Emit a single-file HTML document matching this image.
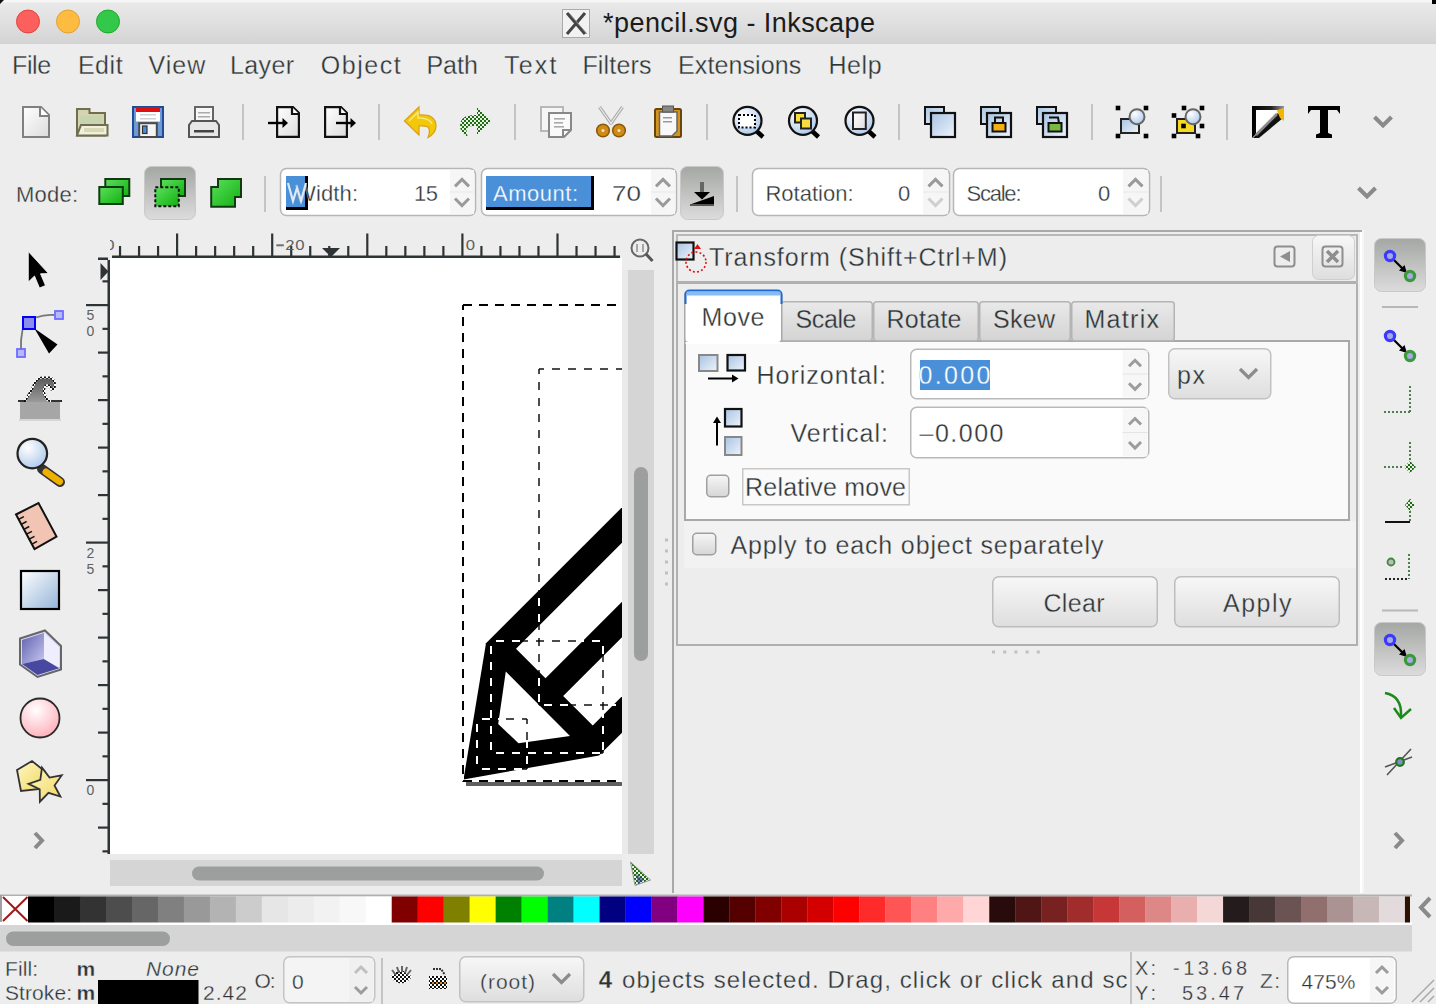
<!DOCTYPE html>
<html><head><meta charset="utf-8"><title>Inkscape</title>
<style>html,body{margin:0;padding:0;background:#ededed;overflow:hidden}
svg{display:block} text{font-family:"Liberation Sans", sans-serif;white-space:pre}</style></head>
<body><svg width="1436" height="1004" viewBox="0 0 1436 1004">
<defs>
<linearGradient id="gTitle" x1="0" y1="0" x2="0" y2="1"><stop offset="0" stop-color="#ebebeb"/><stop offset="1" stop-color="#d4d4d4"/></linearGradient>
<linearGradient id="gBtn" x1="0" y1="0" x2="0" y2="1"><stop offset="0" stop-color="#f7f7f7"/><stop offset="1" stop-color="#dedede"/></linearGradient>
<linearGradient id="gPress" x1="0" y1="0" x2="0" y2="1"><stop offset="0" stop-color="#a5a7a4"/><stop offset="1" stop-color="#dcdcdc"/></linearGradient>
<linearGradient id="gTab" x1="0" y1="0" x2="0" y2="1"><stop offset="0" stop-color="#e9e9e9"/><stop offset="1" stop-color="#d4d4d4"/></linearGradient>
<linearGradient id="gChk" x1="0" y1="0" x2="0" y2="1"><stop offset="0" stop-color="#f6f6f6"/><stop offset="1" stop-color="#d6d6d6"/></linearGradient>
</defs>
<rect x="0" y="0" width="1436" height="1004" fill="#ededed"/>
<rect x="0" y="0" width="1436" height="44" fill="url(#gTitle)"/>
<rect x="0" y="0" width="1436" height="2.5" fill="#f6f6f6"/>
<rect x="0" y="43" width="1436" height="1" fill="#d2d2d2"/>
<path d="M0 0 H4 L0 4 Z" fill="#111"/><rect x="1432" y="0" width="4" height="4" fill="#000"/>
<circle cx="28" cy="21.5" r="11.5" fill="#fc605c" stroke="#e0443e" stroke-width="1"/>
<circle cx="68" cy="21.5" r="11.5" fill="#fdbc40" stroke="#dea236" stroke-width="1"/>
<circle cx="108" cy="21.5" r="11.5" fill="#34c84a" stroke="#1aab29" stroke-width="1"/>
<rect x="562.5" y="9.5" width="27" height="28" fill="#f2f2f2" stroke="#aaa" stroke-width="1"/>
<path d="M567 13 L585 34 M585 13 L567 34" stroke="#444" stroke-width="3"/>
<path d="M569 13 L587 34" stroke="#888" stroke-width="1"/>
<text x="603" y="31.5" font-size="27" fill="#1b1b1b" textLength="272" lengthAdjust="spacing" >*pencil.svg - Inkscape</text>
<text x="12.1" y="73.8" font-size="25" fill="#2e3436" stroke="#ededed" stroke-width="0.3" textLength="39.0" lengthAdjust="spacing" >File</text>
<text x="77.9" y="73.8" font-size="25" fill="#2e3436" stroke="#ededed" stroke-width="0.3" textLength="44.7" lengthAdjust="spacing" >Edit</text>
<text x="148.4" y="73.8" font-size="25" fill="#2e3436" stroke="#ededed" stroke-width="0.3" textLength="56.9" lengthAdjust="spacing" >View</text>
<text x="229.9" y="73.8" font-size="25" fill="#2e3436" stroke="#ededed" stroke-width="0.3" textLength="64.1" lengthAdjust="spacing" >Layer</text>
<text x="320.8" y="73.8" font-size="25" fill="#2e3436" stroke="#ededed" stroke-width="0.3" textLength="79.8" lengthAdjust="spacing" >Object</text>
<text x="426.4" y="73.8" font-size="25" fill="#2e3436" stroke="#ededed" stroke-width="0.3" textLength="51.4" lengthAdjust="spacing" >Path</text>
<text x="504.2" y="73.8" font-size="25" fill="#2e3436" stroke="#ededed" stroke-width="0.3" textLength="52.2" lengthAdjust="spacing" >Text</text>
<text x="582.4" y="73.8" font-size="25" fill="#2e3436" stroke="#ededed" stroke-width="0.3" textLength="69.2" lengthAdjust="spacing" >Filters</text>
<text x="678" y="73.8" font-size="25" fill="#2e3436" stroke="#ededed" stroke-width="0.3" textLength="123.3" lengthAdjust="spacing" >Extensions</text>
<text x="828.4" y="73.8" font-size="25" fill="#2e3436" stroke="#ededed" stroke-width="0.3" textLength="53.2" lengthAdjust="spacing" >Help</text>
<rect x="242" y="104" width="2" height="36" fill="#c4c4c4"/>
<rect x="378" y="104" width="2" height="36" fill="#c4c4c4"/>
<rect x="514" y="104" width="2" height="36" fill="#c4c4c4"/>
<rect x="706" y="104" width="2" height="36" fill="#c4c4c4"/>
<rect x="898" y="104" width="2" height="36" fill="#c4c4c4"/>
<rect x="1091" y="104" width="2" height="36" fill="#c4c4c4"/>
<rect x="1226" y="104" width="2" height="36" fill="#c4c4c4"/>
<text x="16" y="201.5" font-size="22" fill="#2e3436" stroke="#ededed" stroke-width="0.3" textLength="62" lengthAdjust="spacing" >Mode:</text>
<rect x="144.5" y="166.5" width="51" height="53" rx="7" fill="url(#gPress)" stroke="#c9c9c9"/>
<rect x="264" y="176" width="2" height="36" fill="#c4c4c4"/>
<rect x="280.5" y="168.5" width="195" height="47" rx="6" fill="#fff" stroke="#b6b6b6" stroke-width="1.5"/>
<rect x="450" y="170" width="24" height="44" fill="#f6f6f6"/>
<rect x="450" y="191.5" width="24" height="1" fill="#e8e8e8"/>
<path d="M455.0 186.4 L462.0 179.4 L469.0 186.4" fill="none" stroke="#9a9a9a" stroke-width="3"/>
<path d="M455.0 198.56 L462.0 205.56 L469.0 198.56" fill="none" stroke="#9a9a9a" stroke-width="3"/>
<rect x="286" y="176" width="22" height="33" fill="#4a90d9"/>
<rect x="305" y="176" width="3" height="34" fill="#000"/><rect x="286" y="207" width="22" height="3" fill="#000"/>
<text x="295" y="201" font-size="22" fill="#2e3436" stroke="#ffffff" stroke-width="0.3" textLength="63" lengthAdjust="spacing" >Width:</text>
<path d="M288 183 L293 201 L297 188 L301 201 L306 183" fill="none" stroke="#dfe9f5" stroke-width="2.2"/>
<text x="414" y="201" font-size="22" fill="#2e3436" stroke="#ffffff" stroke-width="0.3" textLength="24" lengthAdjust="spacing" >15</text>
<rect x="481.5" y="168.5" width="195" height="47" rx="6" fill="#fff" stroke="#b6b6b6" stroke-width="1.5"/>
<rect x="651" y="170" width="24" height="44" fill="#f6f6f6"/>
<rect x="651" y="191.5" width="24" height="1" fill="#e8e8e8"/>
<path d="M656.0 186.4 L663.0 179.4 L670.0 186.4" fill="none" stroke="#9a9a9a" stroke-width="3"/>
<path d="M656.0 198.56 L663.0 205.56 L670.0 198.56" fill="none" stroke="#9a9a9a" stroke-width="3"/>
<rect x="486" y="176" width="108" height="33" fill="#4a90d9"/>
<rect x="591" y="176" width="3" height="34" fill="#000"/><rect x="486" y="207" width="108" height="3" fill="#000"/>
<text x="493" y="201" font-size="22" fill="#ffffff" stroke="#4a90d9" stroke-width="0.3" textLength="85" lengthAdjust="spacing" >Amount:</text>
<text x="612" y="201" font-size="22" fill="#2e3436" stroke="#ffffff" stroke-width="0.3" textLength="29" lengthAdjust="spacingAndGlyphs">70</text>
<rect x="680.5" y="166.5" width="43" height="53" rx="7" fill="url(#gPress)" stroke="#c9c9c9"/>
<rect x="736" y="176" width="2" height="36" fill="#c4c4c4"/>
<rect x="752.5" y="168.5" width="197" height="47" rx="6" fill="#fff" stroke="#b6b6b6" stroke-width="1.5"/>
<rect x="923" y="170" width="25" height="44" fill="#f6f6f6"/>
<rect x="923" y="191.5" width="25" height="1" fill="#e8e8e8"/>
<path d="M928.5 186.4 L935.5 179.4 L942.5 186.4" fill="none" stroke="#9a9a9a" stroke-width="3"/>
<path d="M928.5 198.56 L935.5 205.56 L942.5 198.56" fill="none" stroke="#cfcfcf" stroke-width="3"/>
<text x="765.5" y="201" font-size="22" fill="#2e3436" stroke="#ffffff" stroke-width="0.3" textLength="88" lengthAdjust="spacing" >Rotation:</text>
<text x="898" y="201" font-size="22" fill="#2e3436" stroke="#ffffff" stroke-width="0.3" textLength="14" lengthAdjust="spacing" >0</text>
<rect x="953.5" y="168.5" width="196" height="47" rx="6" fill="#fff" stroke="#b6b6b6" stroke-width="1.5"/>
<rect x="1123" y="170" width="25" height="44" fill="#f6f6f6"/>
<rect x="1123" y="191.5" width="25" height="1" fill="#e8e8e8"/>
<path d="M1128.5 186.4 L1135.5 179.4 L1142.5 186.4" fill="none" stroke="#9a9a9a" stroke-width="3"/>
<path d="M1128.5 198.56 L1135.5 205.56 L1142.5 198.56" fill="none" stroke="#cfcfcf" stroke-width="3"/>
<text x="966.5" y="201" font-size="22" fill="#2e3436" stroke="#ffffff" stroke-width="0.3" textLength="55" lengthAdjust="spacing" >Scale:</text>
<text x="1098" y="201" font-size="22" fill="#2e3436" stroke="#ffffff" stroke-width="0.3" textLength="14" lengthAdjust="spacing" >0</text>
<rect x="1160" y="176" width="2" height="36" fill="#c4c4c4"/>
<path d="M1358.5 188 L1367 196.5 L1375.5 188" fill="none" stroke="#8a8a8a" stroke-width="4"/>
<path d="M1374.5 117 L1383 125.5 L1391.5 117" fill="none" stroke="#8a8a8a" stroke-width="4"/>
<rect x="110" y="258" width="512" height="596" fill="#ffffff"/>
<rect x="112" y="255.5" width="508" height="2.5" fill="#2e3436"/>
<rect x="118.94" y="246" width="2.2" height="11" fill="#2e3436"/>
<rect x="137.96" y="246" width="2.2" height="11" fill="#2e3436"/>
<rect x="156.98" y="246" width="2.2" height="11" fill="#2e3436"/>
<rect x="176.00" y="233.5" width="2.2" height="23.5" fill="#2e3436"/>
<rect x="195.02" y="246" width="2.2" height="11" fill="#2e3436"/>
<rect x="214.04" y="246" width="2.2" height="11" fill="#2e3436"/>
<rect x="233.06" y="246" width="2.2" height="11" fill="#2e3436"/>
<rect x="252.08" y="246" width="2.2" height="11" fill="#2e3436"/>
<rect x="271.10" y="233.5" width="2.2" height="23.5" fill="#2e3436"/>
<rect x="290.12" y="246" width="2.2" height="11" fill="#2e3436"/>
<rect x="309.14" y="246" width="2.2" height="11" fill="#2e3436"/>
<rect x="328.16" y="246" width="2.2" height="11" fill="#2e3436"/>
<rect x="347.18" y="246" width="2.2" height="11" fill="#2e3436"/>
<rect x="366.20" y="233.5" width="2.2" height="23.5" fill="#2e3436"/>
<rect x="385.22" y="246" width="2.2" height="11" fill="#2e3436"/>
<rect x="404.24" y="246" width="2.2" height="11" fill="#2e3436"/>
<rect x="423.26" y="246" width="2.2" height="11" fill="#2e3436"/>
<rect x="442.28" y="246" width="2.2" height="11" fill="#2e3436"/>
<rect x="461.30" y="233.5" width="2.2" height="23.5" fill="#2e3436"/>
<rect x="480.32" y="246" width="2.2" height="11" fill="#2e3436"/>
<rect x="499.34" y="246" width="2.2" height="11" fill="#2e3436"/>
<rect x="518.36" y="246" width="2.2" height="11" fill="#2e3436"/>
<rect x="537.38" y="246" width="2.2" height="11" fill="#2e3436"/>
<rect x="556.40" y="233.5" width="2.2" height="23.5" fill="#2e3436"/>
<rect x="575.42" y="246" width="2.2" height="11" fill="#2e3436"/>
<rect x="594.44" y="246" width="2.2" height="11" fill="#2e3436"/>
<rect x="613.46" y="246" width="2.2" height="11" fill="#2e3436"/>
<rect x="276.3" y="244.3" width="7.5" height="2" fill="#707070" />
<text x="285.3" y="249.8" font-size="14" fill="#606060" textLength="9.3" lengthAdjust="spacingAndGlyphs" >2</text>
<text x="295.3" y="249.8" font-size="14" fill="#606060" textLength="9.3" lengthAdjust="spacingAndGlyphs" >0</text>
<text x="465.8" y="249.8" font-size="14" fill="#606060" textLength="9.3" lengthAdjust="spacingAndGlyphs" >0</text>
<clipPath id="cpR"><rect x="110" y="230" width="20" height="30"/></clipPath>
<text x="105.3" y="249.8" font-size="14" fill="#606060" textLength="9.3" lengthAdjust="spacingAndGlyphs" clip-path="url(#cpR)">0</text>
<path d="M322 248 L340 248 L331 257 Z" fill="#2e3436"/>
<rect x="107.5" y="260" width="2.5" height="594" fill="#2e3436"/>
<rect x="98" y="257.5" width="10" height="2.5" fill="#2e3436"/>
<rect x="102.5" y="280.25" width="5.5" height="2.2" fill="#2e3436"/>
<rect x="86" y="304.00" width="22" height="2.2" fill="#2e3436"/>
<rect x="102.5" y="327.75" width="5.5" height="2.2" fill="#2e3436"/>
<rect x="98" y="351.50" width="10" height="2.2" fill="#2e3436"/>
<rect x="102.5" y="375.25" width="5.5" height="2.2" fill="#2e3436"/>
<rect x="98" y="399.00" width="10" height="2.2" fill="#2e3436"/>
<rect x="102.5" y="422.75" width="5.5" height="2.2" fill="#2e3436"/>
<rect x="98" y="446.50" width="10" height="2.2" fill="#2e3436"/>
<rect x="102.5" y="470.25" width="5.5" height="2.2" fill="#2e3436"/>
<rect x="98" y="494.00" width="10" height="2.2" fill="#2e3436"/>
<rect x="102.5" y="517.75" width="5.5" height="2.2" fill="#2e3436"/>
<rect x="86" y="541.50" width="22" height="2.2" fill="#2e3436"/>
<rect x="102.5" y="565.25" width="5.5" height="2.2" fill="#2e3436"/>
<rect x="98" y="589.00" width="10" height="2.2" fill="#2e3436"/>
<rect x="102.5" y="612.75" width="5.5" height="2.2" fill="#2e3436"/>
<rect x="98" y="636.50" width="10" height="2.2" fill="#2e3436"/>
<rect x="102.5" y="660.25" width="5.5" height="2.2" fill="#2e3436"/>
<rect x="98" y="684.00" width="10" height="2.2" fill="#2e3436"/>
<rect x="102.5" y="707.75" width="5.5" height="2.2" fill="#2e3436"/>
<rect x="98" y="731.50" width="10" height="2.2" fill="#2e3436"/>
<rect x="102.5" y="755.25" width="5.5" height="2.2" fill="#2e3436"/>
<rect x="86" y="779.00" width="22" height="2.2" fill="#2e3436"/>
<rect x="102.5" y="802.75" width="5.5" height="2.2" fill="#2e3436"/>
<rect x="98" y="826.50" width="10" height="2.2" fill="#2e3436"/>
<rect x="102.5" y="850.25" width="5.5" height="2.2" fill="#2e3436"/>
<path d="M100.5 263 L100.5 280 L108.5 271.5 Z" fill="#2e3436"/>
<text x="94.3" y="320" font-size="14" fill="#606060" text-anchor="end">5</text>
<text x="94.3" y="336" font-size="14" fill="#606060" text-anchor="end">0</text>
<text x="94.3" y="557.5" font-size="14" fill="#606060" text-anchor="end">2</text>
<text x="94.3" y="573.5" font-size="14" fill="#606060" text-anchor="end">5</text>
<text x="94.3" y="795.4" font-size="14" fill="#606060" text-anchor="end">0</text>
<rect x="628" y="270" width="26" height="584" fill="#d5d5d5"/>
<rect x="634" y="467" width="14" height="194" rx="7" fill="#9d9e9e"/>
<rect x="110" y="860" width="512" height="26" fill="#d5d5d5"/>
<rect x="192" y="866.5" width="352" height="14" rx="7" fill="#9d9e9e"/>
<rect x="622" y="270" width="6" height="584" fill="#eaeaea"/>
<rect x="110" y="854" width="512" height="6" fill="#eaeaea"/>
<rect x="672" y="230" width="2" height="663" fill="#a9a9a9"/>
<rect x="672" y="230" width="690" height="2" fill="#a9a9a9"/>
<rect x="674" y="232" width="688" height="661" fill="#ededed"/>
<rect x="1360" y="232" width="2" height="661" fill="#ffffff"/>
<rect x="676" y="234" width="682" height="2" fill="#b8b8b8"/>
<rect x="676" y="234" width="2" height="50" fill="#b8b8b8"/>
<rect x="676" y="281" width="682" height="3" fill="#b0b0b0"/>
<rect x="1356" y="234" width="2" height="50" fill="#b8b8b8"/>
<rect x="1312.5" y="235.5" width="42" height="44" rx="6" fill="url(#gBtn)" stroke="#cfcfcf"/>
<rect x="1322.5" y="246.5" width="20" height="20" rx="3" fill="none" stroke="#8e8e8e" stroke-width="2"/>
<path d="M1327 251 L1338 262 M1338 251 L1327 262" stroke="#8e8e8e" stroke-width="3.5"/>
<rect x="1274.5" y="246.5" width="20" height="20" rx="3" fill="none" stroke="#8e8e8e" stroke-width="2"/>
<path d="M1280 256.5 L1290 251 L1290 262 Z" fill="#8e8e8e"/>
<text x="709" y="265.5" font-size="25" fill="#2e3436" stroke="#ededed" stroke-width="0.3" textLength="298" lengthAdjust="spacing" >Transform (Shift+Ctrl+M)</text>
<rect x="676" y="284" width="2" height="362" fill="#b0b0b0"/>
<rect x="676" y="644" width="682" height="2" fill="#b0b0b0"/>
<rect x="1356" y="284" width="2" height="362" fill="#b0b0b0"/>
<rect x="992.0" y="650.5" width="3" height="3" fill="#c0c0c0"/>
<rect x="1003.2" y="650.5" width="3" height="3" fill="#c0c0c0"/>
<rect x="1014.4" y="650.5" width="3" height="3" fill="#c0c0c0"/>
<rect x="1025.6" y="650.5" width="3" height="3" fill="#c0c0c0"/>
<rect x="1036.8" y="650.5" width="3" height="3" fill="#c0c0c0"/>
<rect x="665" y="538.5" width="3" height="3" fill="#c0c0c0"/>
<rect x="665" y="549.5" width="3" height="3" fill="#c0c0c0"/>
<rect x="665" y="560.5" width="3" height="3" fill="#c0c0c0"/>
<rect x="665" y="571.5" width="3" height="3" fill="#c0c0c0"/>
<rect x="665" y="582.5" width="3" height="3" fill="#c0c0c0"/>
<rect x="684" y="340" width="666" height="181" fill="#fafafa" stroke="none"/>
<rect x="684" y="340" width="2" height="181" fill="#a8a8a8"/>
<rect x="684" y="340" width="666" height="2" fill="#a8a8a8"/>
<rect x="684" y="519" width="666" height="2" fill="#a8a8a8"/>
<rect x="1348" y="340" width="2" height="181" fill="#a8a8a8"/>
<rect x="684" y="521" width="672" height="47" fill="#f2f2f2"/>
<rect x="780.75" y="301.75" width="91.5" height="39" rx="3" fill="url(#gTab)" stroke="#b4b4b4" stroke-width="1.5"/>
<text x="795.5" y="328" font-size="25" fill="#2e3436" stroke="#dfdfdf" stroke-width="0.3" textLength="61" lengthAdjust="spacing" >Scale</text>
<rect x="873.75" y="301.75" width="104.5" height="39" rx="3" fill="url(#gTab)" stroke="#b4b4b4" stroke-width="1.5"/>
<text x="886.5" y="328" font-size="25" fill="#2e3436" stroke="#dfdfdf" stroke-width="0.3" textLength="75" lengthAdjust="spacing" >Rotate</text>
<rect x="979.75" y="301.75" width="90.5" height="39" rx="3" fill="url(#gTab)" stroke="#b4b4b4" stroke-width="1.5"/>
<text x="993.0" y="328" font-size="25" fill="#2e3436" stroke="#dfdfdf" stroke-width="0.3" textLength="62" lengthAdjust="spacing" >Skew</text>
<rect x="1071.75" y="301.75" width="102.5" height="39" rx="3" fill="url(#gTab)" stroke="#b4b4b4" stroke-width="1.5"/>
<text x="1084.5" y="328" font-size="25" fill="#2e3436" stroke="#dfdfdf" stroke-width="0.3" textLength="74.5" lengthAdjust="spacing" >Matrix</text>
<rect x="684.75" y="290.75" width="97" height="52" rx="4" fill="#ffffff" stroke="#a8a8a8" stroke-width="1.5"/>
<rect x="685.5" y="342" width="95.5" height="2" fill="#ffffff"/>
<path d="M685.5 304 L685.5 295 Q685.5 290.5 690 290.5 L777 290.5 Q781.5 290.5 781.5 295 L781.5 304" fill="none" stroke="#1a6ad8" stroke-width="2"/>
<rect x="686.5" y="291.5" width="94" height="4" fill="#88bbf2"/>
<text x="701.5" y="325.5" font-size="25" fill="#2e3436" stroke="#ffffff" stroke-width="0.3" textLength="63" lengthAdjust="spacing" >Move</text>
<text x="756.5" y="383.5" font-size="25" fill="#2e3436" stroke="#fafafa" stroke-width="0.3" textLength="129.5" lengthAdjust="spacing" >Horizontal:</text>
<text x="790.5" y="441.5" font-size="25" fill="#2e3436" stroke="#fafafa" stroke-width="0.3" textLength="97.5" lengthAdjust="spacing" >Vertical:</text>
<rect x="910.75" y="349.25" width="238.0" height="49.5" rx="6" fill="#ffffff" stroke="#b9b9b9" stroke-width="1.5"/>
<rect x="1122.5" y="350.5" width="25" height="47.0" fill="#f7f7f7"/>
<rect x="1122.5" y="373.5" width="25" height="1" fill="#e4e4e4"/>
<path d="M1129.0 366.27 L1135.0 360.27 L1141.0 366.27" fill="none" stroke="#9c9c9c" stroke-width="3"/>
<path d="M1129.0 383.26 L1135.0 389.26 L1141.0 383.26" fill="none" stroke="#9c9c9c" stroke-width="3"/>
<rect x="920" y="360" width="70" height="30" fill="#4a90d9"/>
<text x="918.5" y="383.5" font-size="25" fill="#ffffff" stroke="#4a90d9" stroke-width="0.3" textLength="72" lengthAdjust="spacing" >0.000</text>
<rect x="910.75" y="407.25" width="238.0" height="50.5" rx="6" fill="#ffffff" stroke="#b9b9b9" stroke-width="1.5"/>
<rect x="1122.5" y="408.5" width="25" height="48.0" fill="#f7f7f7"/>
<rect x="1122.5" y="432.0" width="25" height="1" fill="#e4e4e4"/>
<path d="M1129.0 424.54 L1135.0 418.54 L1141.0 424.54" fill="none" stroke="#9c9c9c" stroke-width="3"/>
<path d="M1129.0 442.02 L1135.0 448.02 L1141.0 442.02" fill="none" stroke="#9c9c9c" stroke-width="3"/>
<text x="919.5" y="441.5" font-size="25" fill="#2e3436" stroke="#ffffff" stroke-width="0.3" textLength="84" lengthAdjust="spacing" >–0.000</text>
<rect x="1168.75" y="348.75" width="102" height="50" rx="6" fill="url(#gBtn)" stroke="#c2c2c2" stroke-width="1.5"/>
<text x="1177" y="383.5" font-size="25" fill="#2e3436" stroke="#ebebeb" stroke-width="0.3" textLength="28" lengthAdjust="spacing" >px</text>
<path d="M1240 369 L1248.5 377.5 L1257 369" fill="none" stroke="#8c8c8c" stroke-width="3.2"/>
<rect x="706.75" y="475.25" width="22.0" height="21.5" rx="4" fill="url(#gChk)" stroke="#9f9f9f" stroke-width="1.5"/>
<rect x="742.75" y="468.75" width="166.5" height="36" fill="none" stroke="#c8c8c8" stroke-width="1.5"/>
<text x="745" y="496" font-size="25" fill="#2e3436" stroke="#fafafa" stroke-width="0.3" textLength="161" lengthAdjust="spacing" >Relative move</text>
<rect x="692.75" y="533.25" width="23.0" height="21.5" rx="4" fill="url(#gChk)" stroke="#9f9f9f" stroke-width="1.5"/>
<text x="730.5" y="553.5" font-size="25" fill="#2e3436" stroke="#f2f2f2" stroke-width="0.3" textLength="373" lengthAdjust="spacing" >Apply to each object separately</text>
<rect x="992.75" y="576.75" width="164.5" height="50" rx="6" fill="url(#gBtn)" stroke="#bdbdbd" stroke-width="1.5"/>
<text x="1043.5" y="611.5" font-size="25" fill="#2e3436" stroke="#ebebeb" stroke-width="0.3" textLength="61" lengthAdjust="spacing" >Clear</text>
<rect x="1174.75" y="576.75" width="164.5" height="50" rx="6" fill="url(#gBtn)" stroke="#bdbdbd" stroke-width="1.5"/>
<text x="1223.0" y="611.5" font-size="25" fill="#2e3436" stroke="#ebebeb" stroke-width="0.3" textLength="68.5" lengthAdjust="spacing" >Apply</text>
<rect x="0" y="893" width="1436" height="111" fill="#ededed"/>
<rect x="0" y="894.5" width="1412" height="2" fill="#b0b0b0"/>
<rect x="0" y="922" width="1412" height="3" fill="#ffffff"/>
<rect x="0" y="895" width="2" height="27" fill="#a0a0a0"/>
<rect x="2" y="896" width="26" height="26" fill="#ffffff"/>
<path d="M3 897 L27.5 921 M27.5 897 L3 921" stroke="#a01818" stroke-width="2"/>
<rect x="28.00" y="896.5" width="26.20" height="26" fill="#000000"/>
<rect x="53.98" y="896.5" width="26.20" height="26" fill="#1a1a1a"/>
<rect x="79.96" y="896.5" width="26.20" height="26" fill="#333333"/>
<rect x="105.94" y="896.5" width="26.20" height="26" fill="#4d4d4d"/>
<rect x="131.92" y="896.5" width="26.20" height="26" fill="#666666"/>
<rect x="157.90" y="896.5" width="26.20" height="26" fill="#808080"/>
<rect x="183.88" y="896.5" width="26.20" height="26" fill="#999999"/>
<rect x="209.86" y="896.5" width="26.20" height="26" fill="#b3b3b3"/>
<rect x="235.84" y="896.5" width="26.20" height="26" fill="#cccccc"/>
<rect x="261.82" y="896.5" width="26.20" height="26" fill="#e6e6e6"/>
<rect x="287.80" y="896.5" width="26.20" height="26" fill="#ececec"/>
<rect x="313.78" y="896.5" width="26.20" height="26" fill="#f2f2f2"/>
<rect x="339.76" y="896.5" width="26.20" height="26" fill="#f8f8f8"/>
<rect x="365.74" y="896.5" width="26.20" height="26" fill="#ffffff"/>
<rect x="391.72" y="896.5" width="26.20" height="26" fill="#800000"/>
<rect x="417.70" y="896.5" width="26.20" height="26" fill="#ff0000"/>
<rect x="443.68" y="896.5" width="26.20" height="26" fill="#808000"/>
<rect x="469.66" y="896.5" width="26.20" height="26" fill="#ffff00"/>
<rect x="495.64" y="896.5" width="26.20" height="26" fill="#008000"/>
<rect x="521.62" y="896.5" width="26.20" height="26" fill="#00ff00"/>
<rect x="547.60" y="896.5" width="26.20" height="26" fill="#008080"/>
<rect x="573.58" y="896.5" width="26.20" height="26" fill="#00ffff"/>
<rect x="599.56" y="896.5" width="26.20" height="26" fill="#000080"/>
<rect x="625.54" y="896.5" width="26.20" height="26" fill="#0000ff"/>
<rect x="651.52" y="896.5" width="26.20" height="26" fill="#800080"/>
<rect x="677.50" y="896.5" width="26.20" height="26" fill="#ff00ff"/>
<rect x="703.48" y="896.5" width="26.20" height="26" fill="#2b0000"/>
<rect x="729.46" y="896.5" width="26.20" height="26" fill="#550000"/>
<rect x="755.44" y="896.5" width="26.20" height="26" fill="#800000"/>
<rect x="781.42" y="896.5" width="26.20" height="26" fill="#aa0000"/>
<rect x="807.40" y="896.5" width="26.20" height="26" fill="#d40000"/>
<rect x="833.38" y="896.5" width="26.20" height="26" fill="#ff0000"/>
<rect x="859.36" y="896.5" width="26.20" height="26" fill="#ff2a2a"/>
<rect x="885.34" y="896.5" width="26.20" height="26" fill="#ff5555"/>
<rect x="911.32" y="896.5" width="26.20" height="26" fill="#ff8080"/>
<rect x="937.30" y="896.5" width="26.20" height="26" fill="#ffaaaa"/>
<rect x="963.28" y="896.5" width="26.20" height="26" fill="#ffd5d5"/>
<rect x="989.26" y="896.5" width="26.20" height="26" fill="#280b0b"/>
<rect x="1015.24" y="896.5" width="26.20" height="26" fill="#501616"/>
<rect x="1041.22" y="896.5" width="26.20" height="26" fill="#782121"/>
<rect x="1067.20" y="896.5" width="26.20" height="26" fill="#a02c2c"/>
<rect x="1093.18" y="896.5" width="26.20" height="26" fill="#c83737"/>
<rect x="1119.16" y="896.5" width="26.20" height="26" fill="#d35f5f"/>
<rect x="1145.14" y="896.5" width="26.20" height="26" fill="#de8787"/>
<rect x="1171.12" y="896.5" width="26.20" height="26" fill="#e9afaf"/>
<rect x="1197.10" y="896.5" width="26.20" height="26" fill="#f4d7d7"/>
<rect x="1223.08" y="896.5" width="26.20" height="26" fill="#241c1c"/>
<rect x="1249.06" y="896.5" width="26.20" height="26" fill="#483737"/>
<rect x="1275.04" y="896.5" width="26.20" height="26" fill="#6c5353"/>
<rect x="1301.02" y="896.5" width="26.20" height="26" fill="#916f6f"/>
<rect x="1327.00" y="896.5" width="26.20" height="26" fill="#ac9393"/>
<rect x="1352.98" y="896.5" width="26.20" height="26" fill="#c8b7b7"/>
<rect x="1378.96" y="896.5" width="26.20" height="26" fill="#e3dbdb"/>
<rect x="1404.94" y="896.5" width="5.06" height="26" fill="#2b1100"/>
<path d="M1430 898 L1421 907.5 L1430 917" fill="none" stroke="#8a8a8a" stroke-width="4"/>
<rect x="0" y="925" width="1412" height="26.5" fill="#d5d5d5"/>
<rect x="6" y="931.5" width="164" height="14.5" rx="7.25" fill="#9d9e9e"/>
<text x="5" y="975.5" font-size="21" fill="#2e3436" stroke="#ededed" stroke-width="0.3" textLength="33" lengthAdjust="spacing" >Fill:</text>
<text x="5" y="999.5" font-size="21" fill="#2e3436" stroke="#ededed" stroke-width="0.3" textLength="67" lengthAdjust="spacing" >Stroke:</text>
<text x="76.5" y="975.5" font-size="21" fill="#2e3436" stroke="#ededed" stroke-width="0.3" textLength="18" lengthAdjust="spacing" font-weight="bold" >m</text>
<text x="76.5" y="999.5" font-size="21" fill="#2e3436" stroke="#ededed" stroke-width="0.3" textLength="18" lengthAdjust="spacing" font-weight="bold" >m</text>
<text x="146" y="975.5" font-size="21" fill="#2e3436" stroke="#ededed" stroke-width="0.3" textLength="53" lengthAdjust="spacing" font-style="italic" >None</text>
<rect x="98" y="980" width="100.5" height="24" fill="#000000"/>
<text x="203" y="999.5" font-size="21" fill="#2e3436" stroke="#ededed" stroke-width="0.3" textLength="44" lengthAdjust="spacing" >2.42</text>
<text x="254.5" y="988" font-size="21" fill="#2e3436" stroke="#ededed" stroke-width="0.3" textLength="21" lengthAdjust="spacing" >O:</text>
<rect x="283.75" y="956.75" width="91" height="46" rx="6" fill="#f4f4f4" stroke="#c4c4c4" stroke-width="1.5"/>
<rect x="349" y="958.5" width="24" height="43" fill="#f0f0f0"/>
<path d="M355 973 L361 967 L367 973" fill="none" stroke="#c0c0c0" stroke-width="3"/><path d="M355 987 L361 993 L367 987" fill="none" stroke="#9c9c9c" stroke-width="3"/>
<text x="292" y="988.5" font-size="21" fill="#2e3436" stroke="#f4f4f4" stroke-width="0.3" textLength="13" lengthAdjust="spacing" >0</text>
<rect x="381" y="958" width="2" height="46" fill="#c4c4c4"/>
<rect x="459.75" y="956.75" width="124" height="45" rx="6" fill="url(#gBtn)" stroke="#c2c2c2" stroke-width="1.5"/>
<text x="480" y="988.5" font-size="21" fill="#2e3436" stroke="#ebebeb" stroke-width="0.3" textLength="55" lengthAdjust="spacing" >(root)</text>
<path d="M553 974 L561.5 982.5 L570 974" fill="none" stroke="#8c8c8c" stroke-width="3.2"/>
<text x="598.8" y="987.6" font-size="24" fill="#2e3436" stroke="#ededed" stroke-width="0.3" textLength="15" lengthAdjust="spacing" font-weight="bold" >4</text>
<text x="622" y="987.6" font-size="24" fill="#2e3436" stroke="#ededed" stroke-width="0.3" textLength="505.5" lengthAdjust="spacing" >objects selected. Drag, click or click and sc</text>
<rect x="1130" y="952" width="2" height="52" fill="#c4c4c4"/>
<text x="1135" y="974.5" font-size="20" fill="#2e3436" stroke="#ededed" stroke-width="0.3" textLength="21" lengthAdjust="spacing" >X:</text>
<text x="1135" y="999.5" font-size="20" fill="#2e3436" stroke="#ededed" stroke-width="0.3" textLength="21" lengthAdjust="spacing" >Y:</text>
<text x="1173" y="974.5" font-size="20" fill="#2e3436" stroke="#ededed" stroke-width="0.3" textLength="74" lengthAdjust="spacing" >-13.68</text>
<text x="1182" y="999.5" font-size="20" fill="#2e3436" stroke="#ededed" stroke-width="0.3" textLength="62" lengthAdjust="spacing" >53.47</text>
<text x="1260" y="988" font-size="21" fill="#2e3436" stroke="#ededed" stroke-width="0.3" textLength="20" lengthAdjust="spacing" >Z:</text>
<rect x="1287.75" y="956.75" width="108.5" height="46.5" rx="6" fill="#ffffff" stroke="#b9b9b9" stroke-width="1.5"/>
<rect x="1370" y="958.5" width="24" height="43" fill="#f6f6f6"/>
<path d="M1376 973 L1382 967 L1388 973" fill="none" stroke="#9c9c9c" stroke-width="3"/><path d="M1376 987 L1382 993 L1388 987" fill="none" stroke="#9c9c9c" stroke-width="3"/>
<text x="1301.5" y="988.5" font-size="21" fill="#2e3436" stroke="#ffffff" stroke-width="0.3" textLength="54" lengthAdjust="spacing" >475%</text>
<path d="M1412 1002 L1434 980 M1420 1002 L1434 988 M1428 1002 L1434 996" stroke="#a8a8a8" stroke-width="1.5"/>
<clipPath id="cpC"><rect x="110" y="258" width="512" height="596"/></clipPath>
<g clip-path="url(#cpC)">
<rect x="466" y="782" width="160" height="4" fill="#5f5f5f"/>
<rect x="462" y="760" width="2" height="22" fill="#5f5f5f"/>
<path d="M630 499.3 L486 643.3 L463.5 779.5 L599 755.5 L630 724.7 Z" fill="#000"/>
<path d="M516 648.8 L630 534.7 L630 593.8 L545.5 678.3 Z" fill="#fff"/>
<path d="M563.2 696 L630 629.2 L630 688.3 L592.75 725.5 Z" fill="#fff"/>
<path d="M505.8 671.6 L498.2 724 L518.5 743.3 L570 736 Z" fill="#fff"/>
<path d="M463 305 L630 305" stroke="#fff" stroke-width="2" stroke-dasharray="9 7" stroke-dashoffset="8" shape-rendering="crispEdges"/>
<path d="M463 305 L630 305" stroke="#000" stroke-width="2" stroke-dasharray="9 7" stroke-dashoffset="0" shape-rendering="crispEdges"/>
<path d="M463 305 L463 781" stroke="#fff" stroke-width="2" stroke-dasharray="9 7" stroke-dashoffset="12" shape-rendering="crispEdges"/>
<path d="M463 305 L463 781" stroke="#000" stroke-width="2" stroke-dasharray="9 7" stroke-dashoffset="4" shape-rendering="crispEdges"/>
<path d="M463 781 L630 781" stroke="#fff" stroke-width="2" stroke-dasharray="9 7" stroke-dashoffset="8" shape-rendering="crispEdges"/>
<path d="M463 781 L630 781" stroke="#000" stroke-width="2" stroke-dasharray="9 7" stroke-dashoffset="0" shape-rendering="crispEdges"/>
<path d="M539 369 L630 369" stroke="#fff" stroke-width="2" stroke-dasharray="8 8" stroke-dashoffset="11" shape-rendering="crispEdges"/>
<path d="M539 369 L630 369" stroke="#000000" stroke-opacity="0.7" stroke-width="2" stroke-dasharray="8 8" stroke-dashoffset="3" shape-rendering="crispEdges"/>
<path d="M539 369 L539 705" stroke="#fff" stroke-width="2" stroke-dasharray="8 8" stroke-dashoffset="11" shape-rendering="crispEdges"/>
<path d="M539 369 L539 705" stroke="#000000" stroke-opacity="0.7" stroke-width="2" stroke-dasharray="8 8" stroke-dashoffset="3" shape-rendering="crispEdges"/>
<path d="M539 705 L630 705" stroke="#fff" stroke-width="2" stroke-dasharray="8 8" stroke-dashoffset="11" shape-rendering="crispEdges"/>
<path d="M539 705 L630 705" stroke="#000000" stroke-opacity="0.7" stroke-width="2" stroke-dasharray="8 8" stroke-dashoffset="3" shape-rendering="crispEdges"/>
<path d="M491 641 L603 641" stroke="#fff" stroke-width="2" stroke-dasharray="8 8" stroke-dashoffset="11" shape-rendering="crispEdges"/>
<path d="M491 641 L603 641" stroke="#000000" stroke-opacity="0.7" stroke-width="2" stroke-dasharray="8 8" stroke-dashoffset="3" shape-rendering="crispEdges"/>
<path d="M491 641 L491 753" stroke="#fff" stroke-width="2" stroke-dasharray="8 8" stroke-dashoffset="11" shape-rendering="crispEdges"/>
<path d="M491 641 L491 753" stroke="#000000" stroke-opacity="0.7" stroke-width="2" stroke-dasharray="8 8" stroke-dashoffset="3" shape-rendering="crispEdges"/>
<path d="M491 753 L603 753" stroke="#fff" stroke-width="2" stroke-dasharray="8 8" stroke-dashoffset="11" shape-rendering="crispEdges"/>
<path d="M491 753 L603 753" stroke="#000000" stroke-opacity="0.7" stroke-width="2" stroke-dasharray="8 8" stroke-dashoffset="3" shape-rendering="crispEdges"/>
<path d="M603 641 L603 753" stroke="#fff" stroke-width="2" stroke-dasharray="8 8" stroke-dashoffset="11" shape-rendering="crispEdges"/>
<path d="M603 641 L603 753" stroke="#000000" stroke-opacity="0.7" stroke-width="2" stroke-dasharray="8 8" stroke-dashoffset="3" shape-rendering="crispEdges"/>
<path d="M477 719 L527 719" stroke="#fff" stroke-width="2" stroke-dasharray="8 8" stroke-dashoffset="11" shape-rendering="crispEdges"/>
<path d="M477 719 L527 719" stroke="#000000" stroke-opacity="0.7" stroke-width="2" stroke-dasharray="8 8" stroke-dashoffset="3" shape-rendering="crispEdges"/>
<path d="M477 719 L477 769" stroke="#fff" stroke-width="2" stroke-dasharray="8 8" stroke-dashoffset="11" shape-rendering="crispEdges"/>
<path d="M477 719 L477 769" stroke="#000000" stroke-opacity="0.7" stroke-width="2" stroke-dasharray="8 8" stroke-dashoffset="3" shape-rendering="crispEdges"/>
<path d="M477 769 L527 769" stroke="#fff" stroke-width="2" stroke-dasharray="8 8" stroke-dashoffset="11" shape-rendering="crispEdges"/>
<path d="M477 769 L527 769" stroke="#000000" stroke-opacity="0.7" stroke-width="2" stroke-dasharray="8 8" stroke-dashoffset="3" shape-rendering="crispEdges"/>
<path d="M527 719 L527 769" stroke="#fff" stroke-width="2" stroke-dasharray="8 8" stroke-dashoffset="11" shape-rendering="crispEdges"/>
<path d="M527 719 L527 769" stroke="#000000" stroke-opacity="0.7" stroke-width="2" stroke-dasharray="8 8" stroke-dashoffset="3" shape-rendering="crispEdges"/>
</g>
<defs>
<linearGradient id="gDoc" x1="0" y1="0" x2="1" y2="1"><stop offset="0" stop-color="#ffffff"/><stop offset="1" stop-color="#dcdcdc"/></linearGradient>
<linearGradient id="gBlue" x1="0" y1="0" x2="1" y2="1"><stop offset="0" stop-color="#a9c3e2"/><stop offset="1" stop-color="#eef4fb"/></linearGradient>
<linearGradient id="gBlue2" x1="0" y1="0" x2="1" y2="1"><stop offset="0" stop-color="#ffffff"/><stop offset="1" stop-color="#94b4d8"/></linearGradient>
<radialGradient id="gLens" cx="0.35" cy="0.3" r="0.8"><stop offset="0" stop-color="#ffffff"/><stop offset="1" stop-color="#a9c6ea"/></radialGradient>
<linearGradient id="gGreen" x1="0" y1="0" x2="1" y2="1"><stop offset="0" stop-color="#5ce05c"/><stop offset="1" stop-color="#10b010"/></linearGradient>
<linearGradient id="gGray" x1="0" y1="0" x2="0" y2="1"><stop offset="0" stop-color="#6e6e6e"/><stop offset="1" stop-color="#d8d8d8"/></linearGradient>
<radialGradient id="gPink" cx="0.4" cy="0.3" r="0.8"><stop offset="0" stop-color="#ffffff"/><stop offset="1" stop-color="#ffa8b4"/></radialGradient>
<linearGradient id="gYel" x1="0" y1="0" x2="1" y2="1"><stop offset="0" stop-color="#fff8c8"/><stop offset="1" stop-color="#f0d860"/></linearGradient>
<linearGradient id="gPurp" x1="0" y1="0" x2="1" y2="1"><stop offset="0" stop-color="#6060b0"/><stop offset="1" stop-color="#c8c8f0"/></linearGradient>
<pattern id="pChk" width="4" height="4" patternUnits="userSpaceOnUse"><rect width="4" height="4" fill="#ffffff"/><rect width="2" height="2" fill="#111"/><rect x="2" y="2" width="2" height="2" fill="#111"/></pattern>
<pattern id="pChkG" width="4" height="4" patternUnits="userSpaceOnUse"><rect width="4" height="4" fill="#e8efe6"/><rect width="2" height="2" fill="#1e6e10"/><rect x="2" y="2" width="2" height="2" fill="#1e6e10"/></pattern>
</defs>
<path d="M23.0 107.0 L41 107.0 L49.0 115 L49.0 137.0 L23.0 137.0 Z" fill="url(#gDoc)" stroke="#808080" stroke-width="2"/>
<path d="M40 107 L40 116 L49 116" fill="#ffffff" stroke="#808080" stroke-width="2"/>
<path d="M77 109 L89.5 109 L89.5 113 L105 113 L105 135.5 L77 135.5 Z" fill="#d4d4b0" stroke="#6f6f4f" stroke-width="2"/>
<rect x="80" y="116" width="22" height="8" fill="#c8d4b0"/>
<path d="M81 125 L107.5 125 L107.5 135.5 L77 135.5 L81 125 Z" fill="#f0f0dc" stroke="#6f6f4f" stroke-width="2"/>
<rect x="84" y="128" width="20" height="4" fill="#d8d8b4"/>
<rect x="133" y="107" width="30" height="30" fill="#6c9bd6" stroke="#1f4b99" stroke-width="2"/>
<rect x="136" y="107" width="24" height="5" fill="#e01010"/>
<rect x="136" y="112" width="24" height="9.5" fill="#ffffff"/>
<rect x="140" y="114" width="16" height="1.5" fill="#d0d0d0"/><rect x="140" y="118" width="16" height="1.5" fill="#d0d0d0"/>
<rect x="139.2" y="123.2" width="17.6" height="13.8" fill="#f4f4f4" stroke="#4a4a4a" stroke-width="2"/>
<rect x="142.5" y="126" width="4.5" height="7.5" fill="#4a8ad8" stroke="#333" stroke-width="1.2"/>
<rect x="195" y="107" width="18" height="16" fill="#f8f8f8" stroke="#666" stroke-width="2"/>
<rect x="198" y="112" width="12" height="1.5" fill="#aaa"/><rect x="198" y="116" width="12" height="1.5" fill="#aaa"/>
<path d="M189 125 L192 121 L216 121 L219 125 L219 137 L189 137 Z" fill="#e8e8e8" stroke="#555" stroke-width="2"/>
<rect x="194" y="130" width="20" height="2.5" fill="#444"/>
<path d="M277.1 107.1 L293 107.1 L298.9 113 L298.9 136.9 L277.1 136.9 Z" fill="url(#gDoc)" stroke="#111" stroke-width="2.2"/>
<path d="M292 107 L292 114 L299 114" fill="#ffffff" stroke="#111" stroke-width="2.2"/>
<path d="M268 123 L285 123" stroke="#000" stroke-width="2.4"/><path d="M282.5 118 L288 123 L282.5 128 Z" fill="#000"/>
<path d="M325.1 107.1 L341 107.1 L346.9 113 L346.9 136.9 L325.1 136.9 Z" fill="url(#gDoc)" stroke="#111" stroke-width="2.2"/>
<path d="M340 107 L340 114 L347 114" fill="#ffffff" stroke="#111" stroke-width="2.2"/>
<path d="M336 123 L352 123" stroke="#000" stroke-width="2.4"/><path d="M350.5 118 L356 123 L350.5 128 Z" fill="#000"/>
<path d="M404.5 121 L419 107 L419 115 Q436 114 436 126 Q436 133 428 137.5 Q431 130 428 127 Q425 125.5 419 126 L419 135 Z" fill="#f2c80a" stroke="#dba012" stroke-width="1.2"/>
<path d="M409 121 L418 112 L418 118 Q430 118 432 124" fill="none" stroke="#f8e880" stroke-width="1.5"/>
<path d="M491.5 121 L477 107 L477 115 Q460 114 460 126 Q460 133 468 137.5 Q465 130 468 127 Q471 125.5 477 126 L477 135 Z" fill="url(#pChkG)"/>
<rect x="541" y="107" width="22" height="24" fill="#f6f6f6" stroke="#b8b8b8" stroke-width="2"/>
<path d="M549 113 L571 113 L571 130 L564 137 L549 137 Z" fill="#fafafa" stroke="#888" stroke-width="2"/>
<rect x="554" y="118" width="11" height="1.6" fill="#aaa"/><rect x="554" y="122" width="9" height="1.6" fill="#aaa"/><rect x="554" y="126" width="10" height="1.6" fill="#aaa"/>
<path d="M563 137 L563 130 L570 130" fill="none" stroke="#888" stroke-width="2"/>
<path d="M599.5 107 L611.5 124 M622.5 107 L610.5 124" stroke="#aaa" stroke-width="3.2"/>
<path d="M599.5 107 L611.5 124 M622.5 107 L610.5 124" stroke="#eee" stroke-width="1.2"/>
<circle cx="603" cy="130.5" r="6.3" fill="#d08a16" stroke="#8a5a0a" stroke-width="1.6"/><circle cx="603" cy="130.5" r="1.5" fill="#f4e4c4"/>
<circle cx="619" cy="130.5" r="6.3" fill="#d08a16" stroke="#8a5a0a" stroke-width="1.6"/><circle cx="619" cy="130.5" r="1.5" fill="#f4e4c4"/>
<rect x="655" y="109" width="26" height="28" rx="1.5" fill="#d29520" stroke="#6a4508" stroke-width="2"/>
<path d="M659.5 112 L677 112 L677 131 L672 136 L659.5 136 Z" fill="#f8f8f8" stroke="#666" stroke-width="1.5"/>
<rect x="662.5" y="106" width="11" height="6" fill="#888" stroke="#555" stroke-width="1"/>
<rect x="663" y="117" width="9" height="1.5" fill="#999"/><rect x="663" y="121" width="9" height="1.5" fill="#999"/>
<path d="M756.5 131 L763.0 137" stroke="#000" stroke-width="4.5"/>
<circle cx="747.5" cy="120.8" r="14" fill="url(#gLens)" stroke="#111" stroke-width="2.2"/>
<path d="M812 131 L818.5 137" stroke="#000" stroke-width="4.5"/>
<circle cx="803" cy="120.8" r="14" fill="url(#gLens)" stroke="#111" stroke-width="2.2"/>
<path d="M868.5 131 L875.0 137" stroke="#000" stroke-width="4.5"/>
<circle cx="859.5" cy="120.8" r="14" fill="url(#gLens)" stroke="#111" stroke-width="2.2"/>
<rect x="739" y="115" width="16" height="12.5" fill="#fff" stroke="#000" stroke-width="2" stroke-dasharray="2 2"/>
<rect x="795" y="113" width="10" height="9.5" fill="#f8dc40" stroke="#222" stroke-width="2"/>
<rect x="801" y="118.5" width="10" height="10" fill="#f8dc40" stroke="#222" stroke-width="2"/>
<rect x="853" y="112.5" width="12.8" height="16.5" fill="url(#gDoc)" stroke="#222" stroke-width="2"/>
<rect x="925" y="107" width="19" height="17" fill="url(#gBlue)" stroke="#111" stroke-width="2"/>
<rect x="931" y="113" width="24" height="24" fill="url(#gBlue)" stroke="#111" stroke-width="2.2"/>
<rect x="981" y="107" width="19" height="17" fill="url(#gBlue)" stroke="#111" stroke-width="2"/>
<rect x="987" y="113" width="24" height="24" fill="url(#gBlue)" stroke="#111" stroke-width="2.2"/>
<path d="M995 123 L995 117.5 L1003 117.5 L1003 123" fill="none" stroke="#111" stroke-width="2"/>
<rect x="992.5" y="123" width="13" height="8.5" fill="#f4b010" stroke="#111" stroke-width="2"/>
<rect x="1037" y="107" width="19" height="17" fill="url(#gBlue)" stroke="#111" stroke-width="2"/>
<rect x="1043" y="113" width="24" height="24" fill="url(#gBlue)" stroke="#111" stroke-width="2.2"/>
<path d="M1049 117.5 L1058 117.5 L1059 123" fill="none" stroke="#111" stroke-width="2"/>
<rect x="1048.5" y="123" width="13" height="8.5" fill="#7ab840" stroke="#111" stroke-width="2"/>
<path d="M1121 119 L1131 119 L1139 125 L1139 133 L1121 133 Z" fill="url(#gBlue)" stroke="#222" stroke-width="2"/>
<circle cx="1137" cy="116.7" r="7.5" fill="url(#gLens)" stroke="#666" stroke-width="2"/>
<path d="M1177 119 L1187 119 L1195 125 L1195 133 L1177 133 Z" fill="#f8d820" stroke="#222" stroke-width="2"/>
<circle cx="1193" cy="116.7" r="7.5" fill="url(#gLens)" stroke="#666" stroke-width="2"/>
<rect x="1115.7" y="105.7" width="4.6" height="4.6" fill="#000"/>
<rect x="1143.7" y="105.7" width="4.6" height="4.6" fill="#000"/>
<rect x="1115.7" y="133.7" width="4.6" height="4.6" fill="#000"/>
<rect x="1143.7" y="133.7" width="4.6" height="4.6" fill="#000"/>
<rect x="1171.7" y="113.2" width="4.6" height="4.6" fill="#000"/>
<rect x="1181.7" y="105.7" width="4.6" height="4.6" fill="#000"/>
<rect x="1199.7" y="105.7" width="4.6" height="4.6" fill="#000"/>
<rect x="1199.7" y="123.7" width="4.6" height="4.6" fill="#000"/>
<rect x="1171.7" y="133.7" width="4.6" height="4.6" fill="#000"/>
<rect x="1195.7" y="133.7" width="4.6" height="4.6" fill="#000"/>
<rect x="1181.2" y="123.7" width="4.6" height="4.6" fill="#000"/>
<defs><linearGradient id="gPenL" x1="0" y1="0" x2="1" y2="0"><stop offset="0" stop-color="#000"/><stop offset="0.6" stop-color="#222"/><stop offset="1" stop-color="#999"/></linearGradient><linearGradient id="gPenB" x1="0" y1="0" x2="0" y2="1"><stop offset="0" stop-color="#999"/><stop offset="1" stop-color="#000"/></linearGradient></defs>
<rect x="1252" y="106" width="32" height="32" fill="#ededed"/>
<path d="M1252 106 L1284 106 L1284 110 L1256 110 L1256 134 L1252 138 Z" fill="url(#gPenL)"/>
<path d="M1256 110 L1278 110 L1256 132 Z" fill="#ffffff"/>
<path d="M1253 138 L1278 113 L1283 118 L1259 138 Z" fill="#111"/>
<path d="M1256 135 L1277 114" stroke="#8a8a8a" stroke-width="2.5"/>
<path d="M1277 110 L1284 108 L1284 121 L1280 118 Z" fill="#f4b400"/>
<path d="M1308 106 L1340 106 L1340 114 L1337 110 L1328 110 L1328 133 L1332 134.5 L1332 138 L1316 138 L1316 134.5 L1320 133 L1320 110 L1311 110 L1308 114 Z" fill="#000"/>
<rect x="105.3" y="179" width="24" height="17" fill="url(#gGreen)" stroke="#123a12" stroke-width="2"/>
<rect x="99.3" y="187" width="23.5" height="17" fill="url(#gGreen)" stroke="#123a12" stroke-width="2"/>
<rect x="161" y="179" width="24" height="17" fill="url(#gGreen)" stroke="#123a12" stroke-width="2"/>
<rect x="155.3" y="187.2" width="23.5" height="19" fill="url(#gGreen)" stroke="#111" stroke-width="2" stroke-dasharray="3 2"/>
<path d="M218 179 L241 179 L241 197 L235 197 L235 206.8 L211.2 206.8 L211.2 187 L218 187 Z" fill="url(#gGreen)" stroke="#123a12" stroke-width="2"/>
<rect x="700" y="182" width="4" height="10" fill="#666"/>
<path d="M694 192 L710 192 L702 199.5 Z" fill="#000"/>
<path d="M690 204.5 L714 196 L714 204.5 Z" fill="#000"/>
<rect x="690" y="204" width="24" height="2" fill="#555"/>
<path d="M28.3 251.5 L28.3 282 L34.5 276 L39.5 288 L45.5 285.5 L40.5 273.8 L48.5 273.5 Z" fill="#000" stroke="#ffffff" stroke-width="1" stroke-opacity="0.8"/>
<path d="M36 317.5 Q44 314.5 54 315" fill="none" stroke="#777" stroke-width="1.8"/>
<path d="M22.5 330 Q20.5 340 21 349" fill="none" stroke="#777" stroke-width="1.8"/>
<rect x="23" y="317" width="12" height="12" fill="#8c8cf0" stroke="#0000ff" stroke-width="2"/>
<rect x="55" y="311" width="8" height="8" fill="#b8b8f8" stroke="#6c6cff" stroke-width="1.8"/>
<rect x="17" y="349" width="8" height="8" fill="#b8b8f8" stroke="#6c6cff" stroke-width="1.8"/>
<path d="M34.5 328.5 L57.5 344.5 L49 353.5 Z" fill="#000"/>
<defs><linearGradient id="gTw" x1="0" y1="0" x2="0" y2="1"><stop offset="0" stop-color="#5a5a5a"/><stop offset="1" stop-color="#9a9a9a"/></linearGradient></defs>
<rect x="20" y="402" width="40" height="17" fill="#a6a6a6"/>
<rect x="19" y="419" width="42" height="2" fill="#d6d6d6"/>
<path d="M25 402 L32.5 388 Q36 377.5 42 377.5 L50 377.5 Q55 379 55 385.5 Q54.5 390 51.5 389.5 Q50 384.5 46 385.5 Q43.5 388 44 393 L47 399.5 L50 402 Z" fill="url(#gTw)"/>
<path d="M18 401 L25 401 L32.5 388 Q36 377.5 42 377.5 L50 377.5 Q55 379 55 385.5 Q54.5 390 51.5 389.5 Q50 384.5 46 385.5 Q43.5 388 44 393 L47 399.5 L50 401 L62 401" fill="none" stroke="url(#pChk)" stroke-width="2.2"/>
<path d="M18 401 L24 401 M51 401 L61.5 401" stroke="#333" stroke-width="2"/>
<path d="M42 469 L60 482" stroke="#333" stroke-width="10" stroke-linecap="round"/>
<path d="M46 472 L59.5 481.5" stroke="#f0b000" stroke-width="7" stroke-linecap="round"/>
<circle cx="32.3" cy="453.6" r="14.8" fill="url(#gLens)" stroke="#222" stroke-width="2.2"/>
<path d="M16 514.5 L38.5 503 L56.5 536.5 L34.5 549 Z" fill="#f2c4b4" stroke="#111" stroke-width="2"/>
<path d="M18.6 519.4 L23.9 516.6" stroke="#111" stroke-width="1.5"/>
<path d="M21.3 524.4 L26.6 521.5" stroke="#111" stroke-width="1.5"/>
<path d="M23.9 529.3 L29.2 526.5" stroke="#111" stroke-width="1.5"/>
<path d="M26.6 534.2 L31.9 531.4" stroke="#111" stroke-width="1.5"/>
<path d="M29.2 539.1 L34.5 536.3" stroke="#111" stroke-width="1.5"/>
<path d="M31.9 544.1 L37.1 541.3" stroke="#111" stroke-width="1.5"/>
<rect x="21" y="571" width="38" height="38" fill="url(#gBlue2)" stroke="#000" stroke-width="2.2"/>
<path d="M45 630.5 L61 646 L61 669.5 L37.5 677 L20 664.5 L20 638.5 Z" fill="#d8d8f8" stroke="#666" stroke-width="2"/>
<path d="M22 640 L44 633 L44 659 L22 664 Z" fill="url(#gPurp)"/>
<path d="M22 664 L44 659 L60 668 L37.5 675 Z" fill="#4848a0"/>
<path d="M44 633 L59 647 L59 668 L44 659 Z" fill="#eeeeff"/>
<circle cx="40" cy="718" r="19.5" fill="url(#gPink)" stroke="#2a2a2a" stroke-width="1.8"/>
<path d="M17 770 L32 761 L44.5 771 L40 789 L21 791 Z" fill="url(#gYel)" stroke="#333" stroke-width="1.8"/>
<path d="M42.0 767.6 L49.5 777.6 L61.7 775.4 L54.5 785.5 L60.4 796.5 L48.5 792.8 L39.9 801.7 L39.7 789.3 L28.5 783.8 L40.3 779.9 Z" fill="url(#gYel)" stroke="#333" stroke-width="1.8"/>
<path d="M35 833 L42 840.5 L35 848" fill="none" stroke="#8a8a8a" stroke-width="4"/>
<rect x="1362" y="230" width="2" height="663" fill="#f6f6f6"/>
<rect x="1374.5" y="238.5" width="51" height="53" rx="7" fill="url(#gPress)" stroke="#c8c8c8"/>
<path d="M1393 259 L1405 271" stroke="#000" stroke-width="2.2"/>
<path d="M1407 273 L1399 270.5 L1404.5 265 Z" fill="#000"/>
<circle cx="1390" cy="256" r="4.6" fill="#a8a8e8" stroke="#3a3aff" stroke-width="3.2"/>
<circle cx="1410" cy="276" r="4.6" fill="#a8a8e8" stroke="#3a9a3a" stroke-width="3.2"/>
<rect x="1382" y="306" width="36" height="2" fill="#b8b8b8"/>
<path d="M1393 339 L1405 351" stroke="#000" stroke-width="2.2"/>
<path d="M1407 353 L1399 350.5 L1404.5 345 Z" fill="#000"/>
<circle cx="1390" cy="336" r="4.6" fill="#a8a8e8" stroke="#3a3aff" stroke-width="3.2"/>
<circle cx="1410" cy="356" r="4.6" fill="#a8a8e8" stroke="#3a9a3a" stroke-width="3.2"/>
<path d="M1410 386 L1410 412" stroke="#4e7e4e" stroke-width="2" stroke-dasharray="2 2"/>
<path d="M1384 412 L1410 412" stroke="#4e7e4e" stroke-width="2" stroke-dasharray="2 2"/>
<path d="M1410 442 L1410 467" stroke="#4e7e4e" stroke-width="2" stroke-dasharray="2 2"/>
<path d="M1384 467 L1404 467" stroke="#4e7e4e" stroke-width="2" stroke-dasharray="2 2"/>
<path d="M1410 461 L1416 467 L1410 473 L1404 467 Z" fill="url(#pChkG)"/>
<path d="M1410 499 L1410 522" stroke="#4e7e4e" stroke-width="2" stroke-dasharray="2 2"/>
<path d="M1385 522 L1410 522" stroke="#111" stroke-width="2"/>
<path d="M1410 499 L1415 505 L1410 511 L1405 505 Z" fill="url(#pChkG)"/>
<path d="M1409 554 L1409 579" stroke="#4e7e4e" stroke-width="2" stroke-dasharray="2 2"/>
<path d="M1385 579 L1409 579" stroke="#222" stroke-width="2" stroke-dasharray="2 2"/>
<circle cx="1391" cy="562" r="3.5" fill="#bbb" stroke="#3a8a3a" stroke-width="1.8"/>
<rect x="1382" y="609.5" width="36" height="2" fill="#b8b8b8"/>
<rect x="1374.5" y="622.5" width="51" height="53" rx="7" fill="url(#gPress)" stroke="#c8c8c8"/>
<path d="M1393 643 L1405 655" stroke="#000" stroke-width="2.2"/>
<path d="M1407 657 L1399 654.5 L1404.5 649 Z" fill="#000"/>
<circle cx="1390" cy="640" r="4.6" fill="#a8a8e8" stroke="#3a3aff" stroke-width="3.2"/>
<circle cx="1410" cy="660" r="4.6" fill="#a8a8e8" stroke="#3a9a3a" stroke-width="3.2"/>
<path d="M1385 693 Q1402 696 1401 716" fill="none" stroke="#1a8a1a" stroke-width="2.5"/>
<path d="M1394 708 L1401 718 L1411 709" fill="none" stroke="#1a8a1a" stroke-width="2.5"/>
<path d="M1387 775 L1411 749 M1385 767 L1412 757" stroke="#555" stroke-width="1.6"/>
<circle cx="1400" cy="762" r="3.8" fill="#8888cc" stroke="#1a7a1a" stroke-width="2.2"/>
<path d="M1395 833 L1402 840.5 L1395 848" fill="none" stroke="#8a8a8a" stroke-width="4"/>
<rect x="676.5" y="242.5" width="17" height="17" fill="url(#gBlue)" stroke="#111" stroke-width="2.2"/>
<circle cx="696" cy="262" r="10" fill="none" stroke="#e01010" stroke-width="1.6" stroke-dasharray="2 2.2"/>
<path d="M694 249 L701 249 L697.5 244 Z" fill="#e01010"/>
<rect x="699" y="355" width="18.5" height="16" fill="url(#gBlue)" stroke="#888" stroke-width="2"/>
<rect x="727.5" y="355" width="17.5" height="15.5" fill="url(#gBlue)" stroke="#111" stroke-width="2.2"/>
<path d="M708 378.5 L734 378.5" stroke="#000" stroke-width="2"/><path d="M732 374.5 L738.5 378.5 L732 382.5 Z" fill="#000"/>
<rect x="725" y="409" width="16.5" height="17.5" fill="url(#gBlue)" stroke="#111" stroke-width="2.2"/>
<rect x="725" y="437" width="16.5" height="18" fill="url(#gBlue)" stroke="#888" stroke-width="2"/>
<path d="M717 445.5 L717 421" stroke="#000" stroke-width="2"/><path d="M713 423 L717 416.5 L721 423 Z" fill="#000"/>
<path d="M390.5 977 Q401 964 412 977 Q401 990 390.5 977 Z" fill="url(#pChk)"/>
<path d="M392 970 L396 975 M397 967 L399 973 M402 966 L402 972 M407 967 L405 973 M411 970 L407 975" stroke="#666" stroke-width="2"/>
<path d="M433 969 L441 969 L445 975" fill="none" stroke="#333" stroke-width="2" stroke-dasharray="2 1"/>
<rect x="429" y="976" width="18" height="13" fill="url(#pChk)"/>
<path d="M432 983 L446 983" stroke="#d09030" stroke-width="2" stroke-dasharray="2 2"/>
<circle cx="640" cy="248" r="8.5" fill="none" stroke="#666" stroke-width="2"/>
<path d="M646 254 L652.5 261" stroke="#555" stroke-width="3"/>
<path d="M637 244 L637 252 M643 244 L643 252" stroke="#888" stroke-width="1.4"/>
<path d="M630.5 862 L650.5 880 L635 885.5 Z" fill="url(#pChkG)" stroke="#999" stroke-width="1"/>
<path d="M636 874 L644 880 L638 884 Z" fill="#3030a0" opacity="0.6"/>
</svg></body></html>
